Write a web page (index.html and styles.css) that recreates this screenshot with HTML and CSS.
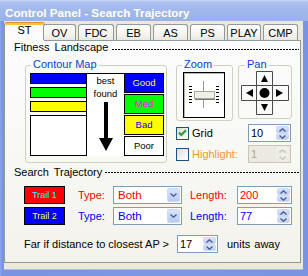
FILE: index.html
```html
<!DOCTYPE html>
<html>
<head>
<meta charset="utf-8">
<title>Control Panel - Search Trajectory</title>
<link rel="stylesheet" href="styles.css">
</head>
<body>
<div class="window">
  <div class="titlebar">Control Panel - Search Trajectory</div>
  <div class="client">
    <div class="tabs">
      <div class="tab sel w-st">ST</div>
      <div class="tab first w-ov">OV</div>
      <div class="tab w-fdc">FDC</div>
      <div class="tab w-eb">EB</div>
      <div class="tab w-as">AS</div>
      <div class="tab w-ps">PS</div>
      <div class="tab w-play">PLAY</div>
      <div class="tab w-cmp">CMP</div>
    </div>
    <div class="panel">
      <div class="sec-head fit"><span class="sec-title">Fitness Landscape</span><i class="dash"></i></div>

      <div class="landscape">
        <fieldset class="group contour">
          <legend class="lg-contour">Contour Map</legend>
          <div class="contour-body">
            <div class="bars">
              <div class="bar b-blue"></div>
              <div class="bar b-green"></div>
              <div class="bar b-yellow"></div>
              <div class="bar b-white"></div>
            </div>
            <div class="mid">
              <div class="mid-line">best</div>
              <div class="mid-line">found</div>
              <svg class="arrow" width="14" height="50" viewBox="0 0 14 50"><rect x="5" y="0" width="4" height="38" fill="#000"/><path d="M0 36H14L7 49Z" fill="#000"/></svg>
            </div>
            <div class="levels">
              <div class="lvl l-good">Good</div>
              <div class="lvl l-med">Med</div>
              <div class="lvl l-bad">Bad</div>
              <div class="lvl l-poor">Poor</div>
            </div>
          </div>
        </fieldset>

        <div class="right-col">
          <div class="groups">
            <fieldset class="group zoom">
              <legend class="lg-zoom">Zoom</legend>
              <div class="slider-box">
                <svg width="40" height="44" viewBox="0 0 40 44">
                  <path d="M5 13.5h3M5 16.5h3M5 19.5h3M5 23.5h3M5 26.5h3M5 29.5h3M32 13.5h3M32 16.5h3M32 19.5h3M32 23.5h3M32 26.5h3M32 29.5h3" stroke="#000" fill="none"/>
                  <line x1="19.5" y1="8" x2="19.5" y2="35" stroke="#9a9a90"/>
                  <line x1="20.5" y1="8" x2="20.5" y2="35" stroke="#ffffff"/>
                  <rect x="10.5" y="18.5" width="20" height="7" fill="#efeee7" stroke="#a9a89d"/>
                  <line x1="11" y1="26.5" x2="31" y2="26.5" stroke="#77766c"/>
                </svg>
              </div>
            </fieldset>
            <fieldset class="group pan">
              <legend class="lg-pan">Pan</legend>
              <svg class="pan-pad" width="48" height="44" viewBox="0 0 48 44">
                <path d="M15.5 0.5H31.5V14.5H47.5V29.5H31.5V43.5H15.5V29.5H0.5V14.5H15.5Z M15.5 14.5H31.5V29.5H15.5Z" fill="none" stroke="#4a4a4a"/>
                <path d="M20 11H27L23.5 4Z M12 18V26L5 22Z M35 18V26L42 22Z M20 33H27L23.5 40Z" fill="#000"/>
                <circle cx="23.5" cy="22" r="5" fill="#000"/>
              </svg>
            </fieldset>
          </div>

          <div class="opt-row">
            <span class="cb"><svg width="11" height="11" viewBox="0 0 11 11"><path d="M2 4.5L4.2 7L9 2.2" fill="none" stroke="#21a121" stroke-width="2"/></svg></span>
            <span class="opt-label">Grid</span>
            <div class="spin s-opt">
              <span class="spin-val">10</span>
              <span class="spin-btns">
                <span class="sb"><svg width="7" height="4" viewBox="0 0 7 4"><path d="M0.5 3.5L3.5 0.8L6.5 3.5"/></svg></span>
                <span class="sb"><svg width="7" height="4" viewBox="0 0 7 4"><path d="M0.5 0.5L3.5 3.2L6.5 0.5"/></svg></span>
              </span>
            </div>
          </div>
          <div class="opt-row hl">
            <span class="cb"></span>
            <span class="opt-label hl-label">Highlight:</span>
            <div class="spin s-opt disabled">
              <span class="spin-val">1</span>
              <span class="spin-btns">
                <span class="sb"><svg width="7" height="4" viewBox="0 0 7 4"><path d="M0.5 3.5L3.5 0.8L6.5 3.5"/></svg></span>
                <span class="sb"><svg width="7" height="4" viewBox="0 0 7 4"><path d="M0.5 0.5L3.5 3.2L6.5 0.5"/></svg></span>
              </span>
            </div>
          </div>
        </div>
      </div>

      <div class="sec-head search"><span class="sec-title">Search Trajectory</span><i class="dash"></i></div>

      <div class="trail-row red first-row">
        <div class="trail-btn t1">Trail 1</div>
        <span class="lbl type-lbl">Type:</span>
        <div class="select">
          <span class="select-val">Both</span>
          <span class="drop"><svg width="7" height="4" viewBox="0 0 7 4"><path d="M0.5 0.5L3.5 3.2L6.5 0.5"/></svg></span>
        </div>
        <span class="lbl len-lbl">Length:</span>
        <div class="spin s-len">
          <span class="spin-val">200</span>
          <span class="spin-btns">
            <span class="sb"><svg width="7" height="4" viewBox="0 0 7 4"><path d="M0.5 3.5L3.5 0.8L6.5 3.5"/></svg></span>
            <span class="sb"><svg width="7" height="4" viewBox="0 0 7 4"><path d="M0.5 0.5L3.5 3.2L6.5 0.5"/></svg></span>
          </span>
        </div>
      </div>
      <div class="trail-row blue">
        <div class="trail-btn t2">Trail 2</div>
        <span class="lbl type-lbl">Type:</span>
        <div class="select">
          <span class="select-val">Both</span>
          <span class="drop"><svg width="7" height="4" viewBox="0 0 7 4"><path d="M0.5 0.5L3.5 3.2L6.5 0.5"/></svg></span>
        </div>
        <span class="lbl len-lbl">Length:</span>
        <div class="spin s-len">
          <span class="spin-val">77</span>
          <span class="spin-btns">
            <span class="sb"><svg width="7" height="4" viewBox="0 0 7 4"><path d="M0.5 3.5L3.5 0.8L6.5 3.5"/></svg></span>
            <span class="sb"><svg width="7" height="4" viewBox="0 0 7 4"><path d="M0.5 0.5L3.5 3.2L6.5 0.5"/></svg></span>
          </span>
        </div>
      </div>

      <div class="far-row">
        <span class="far-lbl">Far if distance to closest AP &gt;</span>
        <div class="spin s-far">
          <span class="spin-val">17</span>
          <span class="spin-btns">
            <span class="sb"><svg width="7" height="4" viewBox="0 0 7 4"><path d="M0.5 3.5L3.5 0.8L6.5 3.5"/></svg></span>
            <span class="sb"><svg width="7" height="4" viewBox="0 0 7 4"><path d="M0.5 0.5L3.5 3.2L6.5 0.5"/></svg></span>
          </span>
        </div>
        <span class="units">units away</span>
      </div>
    </div>
  </div>
</div>
</body>
</html>
```

FILE: styles.css
```css
* { box-sizing: border-box; }
html, body { margin: 0; padding: 0; }
body {
  font-family: "Liberation Sans", Arial, sans-serif;
  font-size: 11px;
  color: #000;
  background: #7d99e3;
}

.window {
  width: 308px;
  height: 276px;
  display: flex;
  flex-direction: column;
  background: linear-gradient(90deg, #8ea8ec 0, #7995e2 2px, #7c98e3 50%, #7995e2 100%);
}

.titlebar {
  flex: none;
  height: 21px;
  padding: 4px 0 0 5px;
  line-height: 17px;
  font-size: 11.7px;
  font-weight: bold;
  color: #ffffff;
  white-space: nowrap;
  background: linear-gradient(180deg, #c9d6f7 0px, #aec2f0 2px, #a2b9ed 9px, #9ab2ea 21px);
}

.client {
  flex: 1;
  margin: 0 5px 7px 4px;
  padding: 1px 2px 6px 0;
  background: #ece9d8;
  display: flex;
  flex-direction: column;
  box-shadow: 0 1px 0 #a9bcef;
}

/* tabs */
.tabs {
  flex: none;
  height: 18px;
  display: flex;
  align-items: flex-end;
  position: relative;
  z-index: 1;
}
.tab {
  height: 16px;
  margin-left: 2px;
  padding-top: 1px;
  border: 1px solid #919b9c;
  border-bottom: none;
  border-radius: 3px 3px 0 0;
  background: linear-gradient(180deg, #ffffff 0%, #f3f2ec 70%, #e9e7df 100%);
  text-align: center;
  line-height: 14px;
  font-size: 11px;
}
.tab.first { margin-left: 0; }
.tab.sel {
  height: 19px;
  margin: 0 -2px -1px 0;
  padding-top: 0;
  border-top: 1px solid #e68b2c;
  box-shadow: inset 0 2px 0 #ffc83c;
  background: #fcfcfe;
}
.w-st { width: 41px; }
.w-ov { width: 33px; }
.w-fdc { width: 36px; }
.w-eb { width: 35px; }
.w-as { width: 35px; }
.w-ps { width: 35px; }
.w-play { width: 34px; }
.w-cmp { width: 35px; }

/* panel */
.panel {
  flex: 1;
  border: 1px solid #919b9c;
  background: linear-gradient(180deg, #fcfcfe 0%, #f8f8f5 50%, #f3f2ec 100%);
}

.sec-head {
  display: flex;
  height: 13px;
  line-height: 13px;
  margin: 0 1px 0 9px;
  word-spacing: 2px;
  white-space: nowrap;
}
.sec-head.search { margin-top: 3px; }
.dash {
  flex: 1;
  height: 1px;
  margin: 8px 0 0 4px;
  background: repeating-linear-gradient(90deg, #000 0 2px, transparent 2px 3px);
}
.search .dash { margin-top: 6px; margin-left: 3px; }

.landscape {
  display: flex;
  align-items: flex-start;
  margin: 6px 0 0 20px;
}

/* group boxes */
.group {
  margin: 0;
  min-width: 0;
  border: 1px solid #d0d0bf;
  border-radius: 3px;
}
.group legend {
  padding: 0 2px 2px 2px;
  line-height: 9px;
  font-size: 11px;
  color: #0046d5;
}
.contour { width: 142px; padding: 2px 2px 6px 4px; }
.lg-contour { margin-left: 1px; }
.zoom { width: 57px; padding: 1px 7px 2px 6px; }
.lg-zoom { margin-left: -1px; }
.pan { width: 54px; padding: 0 2px 3px 2px; }
.lg-pan { margin-left: 4px; }

.contour-body { display: flex; height: 83px; }
.bars {
  width: 56px;
  display: flex;
  flex-direction: column;
  gap: 3px;
}
.bar {
  height: 11px;
  border: 1px solid #000;
  border-right: none;
}
.b-blue { background: #0000ff; }
.b-green { background: #00ff00; }
.b-yellow { background: #ffff00; }
.b-white { background: #ffffff; height: 41px; }

.mid {
  width: 38px;
  background: #ffffff;
  border-left: 1px solid #000;
  border-top: 1px solid #000;
  display: flex;
  flex-direction: column;
  align-items: center;
  font-size: 9.5px;
  line-height: 13px;
}
.arrow { margin-top: 2px; display: block; }

.levels {
  width: 40px;
  display: flex;
  flex-direction: column;
  gap: 1px;
}
.lvl {
  height: 20px;
  border: 1px solid #000;
  text-align: center;
  line-height: 18px;
  font-size: 9.5px;
}
.l-good { background: #0000ff; color: #ffff00; }
.l-med { background: #00ff00; color: #ff00ff; }
.l-bad { background: #ffff00; color: #0000ff; }
.l-poor { background: #ffffff; color: #000; }

.right-col {
  width: 116px;
  margin-left: 9px;
}
.groups {
  display: flex;
  align-items: flex-start;
  gap: 5px;
}
.slider-box {
  width: 42px;
  height: 46px;
  border: 1px solid #000;
  background: #ffffff;
  box-shadow: inset 1px 1px 0 #b9b7ad;
}
.slider-box svg, .pan-pad { display: block; }

.opt-row {
  display: flex;
  align-items: center;
  height: 18px;
  margin-top: 3px;
}
.cb {
  width: 13px;
  height: 13px;
  border: 1px solid #1c5180;
  background: linear-gradient(135deg, #dcdbd3 0%, #f4f4f0 60%, #ffffff 100%);
  display: flex;
}
.cb svg { display: block; }
.opt-label { margin-left: 3px; line-height: 13px; }
.hl-label { color: #f5962f; }

/* spinners, selects */
.spin {
  display: flex;
  height: 18px;
  border: 1px solid #7f9db9;
  background: #ffffff;
}
.s-opt { width: 43px; margin-left: auto; margin-right: 1px; }
.s-len { width: 55px; }
.s-far { width: 41px; }
.spin-val {
  flex: 1;
  padding-left: 2px;
  line-height: 16px;
  font-size: 11px;
}
.spin-btns {
  width: 13px;
  margin: 1px 1px 1px 0;
  display: flex;
  flex-direction: column;
}
.sb {
  flex: 1;
  display: flex;
  align-items: center;
  justify-content: center;
  border: 1px solid #cbd8fb;
  border-radius: 2px;
  background: linear-gradient(180deg, #dbe4fc 0%, #bccdf8 100%);
}
.sb svg, .drop svg { display: block; fill: none; stroke: #4d6185; stroke-width: 1.4; }
.spin.disabled {
  background: #ebe9e0;
  border-color: #c9c7ba;
  color: #aca899;
}
.spin.disabled .sb {
  border-color: #f0efe8;
  background: linear-gradient(180deg, #f4f3ee 0%, #e8e6dc 100%);
}
.spin.disabled .sb svg { stroke: #c9c7ba; }

.trail-row {
  display: flex;
  align-items: center;
  height: 18px;
  margin: 3px 0 0 19px;
}
.trail-row.first-row { margin-top: 7px; }
.red { color: #ff0000; }
.blue { color: #0000ff; }
.trail-btn {
  width: 41px;
  height: 18px;
  border: 1px solid #000;
  text-align: center;
  line-height: 16px;
  font-size: 9px;
}
.t1 { background: #ff0000; color: #00ffff; }
.t2 { background: #0000ff; color: #ffff00; }
.lbl { line-height: 13px; }
.type-lbl { width: 35px; margin-left: 13px; }
.len-lbl { width: 47px; margin-left: 8px; }
.select {
  display: flex;
  width: 69px;
  height: 18px;
  border: 1px solid #7f9db9;
  background: #ffffff;
}
.select-val {
  flex: 1;
  padding-left: 4px;
  line-height: 16px;
  font-size: 11.5px;
}
.drop {
  width: 13px;
  margin: 1px;
  display: flex;
  align-items: center;
  justify-content: center;
  border: 1px solid #cbd8fb;
  border-radius: 2px;
  background: linear-gradient(180deg, #dbe4fc 0%, #b8caf7 100%);
}

.far-row {
  display: flex;
  align-items: center;
  height: 18px;
  margin: 10px 0 0 19px;
}
.far-lbl { width: 153px; white-space: nowrap; }
.units { margin-left: 9px; word-spacing: 1px; }
```
